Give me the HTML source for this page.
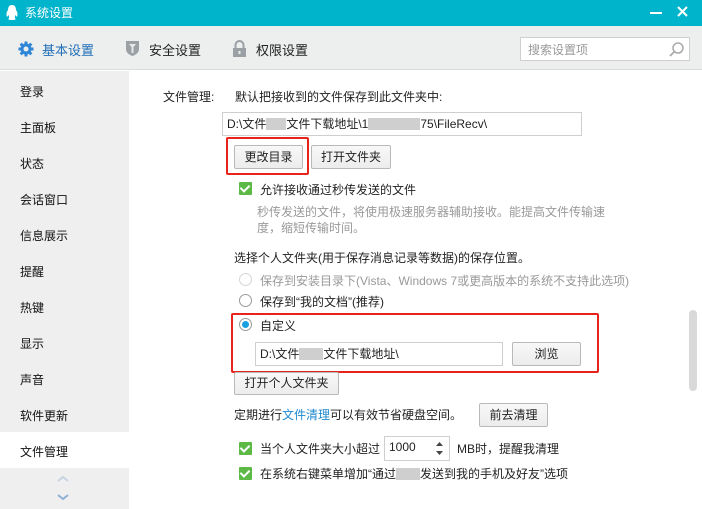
<!DOCTYPE html>
<html><head><meta charset="utf-8"><style>
*{margin:0;padding:0;box-sizing:border-box}
body{width:702px;height:509px;overflow:hidden;position:relative;font-family:"Liberation Sans","Noto Sans CJK SC",sans-serif;font-size:12px;color:#222;background:#fff}
.a{position:absolute;white-space:nowrap}
.btn{position:absolute;border:1px solid #b9b9b9;border-radius:2px;background:linear-gradient(#f8f8f8,#ececec);text-align:center;font-size:12px;color:#222}
.inp{position:absolute;border:1px solid #cfcfcf;background:#fff;padding-left:4px;font-size:12px}
.cb{position:absolute;width:13px;height:13px;background:#5cb946;border-radius:1px}
.cb:after{content:"";position:absolute;left:3px;top:1px;width:4px;height:7px;border:solid #fff;border-width:0 2px 2px 0;transform:rotate(45deg)}
.rd{position:absolute;width:13px;height:13px;border:1px solid #9a9a9a;border-radius:50%;background:#fff}
.side{position:absolute;left:20px;font-size:12px;color:#111}
.blur{display:inline-block;background:#cfcfcf;height:12px;vertical-align:-2px}
</style></head><body>
<div class="a" style="left:0;top:0;width:702px;height:26px;background:#00b4cc"></div>
<svg class="a" style="left:5px;top:4px" width="14" height="17" viewBox="0 0 14 17"><path d="M7 1C4 1 3 3.5 3 6C1.5 8 1 10 2 13C3 12 3 11.5 3.5 11C4 13 5 14 3 15C5 16.5 9 16.5 11 15C9 14 10 13 10.5 11C11 11.5 11 12 12 13C13 10 12.5 8 11 6C11 3.5 10 1 7 1Z" fill="#fff"/></svg>
<div class="a" style="left:25px;top:4px;color:#fff;font-size:12px">系统设置</div>
<div class="a" style="left:650px;top:12px;width:12px;height:2px;background:#fff"></div>
<svg class="a" style="left:677px;top:6px" width="11" height="11"><path d="M1 1L10 10M10 1L1 10" stroke="#fff" stroke-width="2"/></svg>
<div class="a" style="left:0;top:26px;width:702px;height:44px;background:#edeeee;border-bottom:1px solid #dcdcdc"></div>
<svg class="a" style="left:18px;top:41px" width="16" height="16" viewBox="0 0 16 16"><g fill="#2f86d6"><circle cx="8" cy="8" r="5.5"/><rect x="6.5" y="0.5" width="3" height="15"/><rect x="0.5" y="6.5" width="15" height="3"/><rect x="6.5" y="0.5" width="3" height="15" transform="rotate(45 8 8)"/><rect x="6.5" y="0.5" width="3" height="15" transform="rotate(-45 8 8)"/></g><circle cx="8" cy="8" r="2.5" fill="#edeeee"/></svg>
<div class="a" style="left:42px;top:40px;font-size:13px;color:#1f6fb8">基本设置</div>
<svg class="a" style="left:125px;top:40px" width="15" height="17" viewBox="0 0 15 17"><path d="M1 1H14V9C14 13 10 15 7.5 16C5 15 1 13 1 9Z" fill="#9aa0a4"/><path d="M4 4H11L8.5 7V13H6.5V7Z" fill="#e8e8e8"/></svg>
<div class="a" style="left:149px;top:40px;font-size:13px">安全设置</div>
<svg class="a" style="left:232px;top:40px" width="15" height="17" viewBox="0 0 15 17"><path d="M3.5 8V5A4 4 0 0 1 11.5 5V8" stroke="#9aa0a4" stroke-width="2" fill="none"/><rect x="1" y="8" width="13" height="9" fill="#9aa0a4"/><rect x="6.5" y="11" width="2" height="3" fill="#edeeee"/></svg>
<div class="a" style="left:256px;top:40px;font-size:13px">权限设置</div>
<div class="a" style="left:520px;top:37px;width:170px;height:24px;border:1px solid #cfcfcf;background:#fff"></div>
<div class="a" style="left:528px;top:41px;color:#999;font-size:12px">搜索设置项</div>
<svg class="a" style="left:668px;top:41px" width="17" height="17"><circle cx="10" cy="7" r="5" stroke="#aaa" stroke-width="1.5" fill="none"/><path d="M6.5 10.5L2 15" stroke="#aaa" stroke-width="1.8"/></svg>
<div class="a" style="left:0;top:71px;width:129px;height:438px;background:#efefef"></div>
<div class="a" style="left:0;top:432px;width:129px;height:36px;background:#fff"></div>
<div class="side" style="top:83px">登录</div>
<div class="side" style="top:119px">主面板</div>
<div class="side" style="top:155px">状态</div>
<div class="side" style="top:191px">会话窗口</div>
<div class="side" style="top:227px">信息展示</div>
<div class="side" style="top:263px">提醒</div>
<div class="side" style="top:299px">热键</div>
<div class="side" style="top:335px">显示</div>
<div class="side" style="top:371px">声音</div>
<div class="side" style="top:407px">软件更新</div>
<div class="side" style="top:443px">文件管理</div>
<svg class="a" style="left:57px;top:475px" width="12" height="28"><path d="M1 6L6 2L11 6" stroke="#c5d3e3" stroke-width="2" fill="none"/><path d="M1 20L6 24L11 20" stroke="#8fb0d6" stroke-width="2" fill="none"/></svg>
<div class="a" style="left:163px;top:88px">文件管理:</div>
<div class="a" style="left:235px;top:88px">默认把接收到的文件保存到此文件夹中:</div>
<div class="inp" style="left:222px;top:112px;width:360px;height:24px;line-height:22px">D:\文件<span class="blur" style="width:20px"></span>文件下载地址\1<span class="blur" style="width:52px"></span>75\FileRecv\</div>
<div class="a" style="left:226px;top:137px;width:83px;height:38px;border:2px solid #e8231c;border-radius:2px"></div>
<div class="btn" style="left:234px;top:145px;width:69px;height:24px;line-height:22px">更改目录</div>
<div class="btn" style="left:311px;top:145px;width:80px;height:24px;line-height:22px">打开文件夹</div>
<div class="cb" style="left:239px;top:182px"></div>
<div class="a" style="left:260px;top:181px">允许接收通过秒传发送的文件</div>
<div class="a" style="left:257px;top:203px;color:#999">秒传发送的文件，将使用极速服务器辅助接收。能提高文件传输速</div>
<div class="a" style="left:257px;top:219px;color:#999">度，缩短传输时间。</div>
<div class="a" style="left:234px;top:249px">选择个人文件夹(用于保存消息记录等数据)的保存位置。</div>
<div class="rd" style="left:239px;top:273px;border-color:#d5d5d5"></div>
<div class="a" style="left:260px;top:272px;color:#999">保存到安装目录下(Vista、Windows 7或更高版本的系统不支持此选项)</div>
<div class="rd" style="left:239px;top:294px"></div>
<div class="a" style="left:260px;top:293px">保存到“我的文档”(推荐)</div>
<div class="a" style="left:231px;top:313px;width:368px;height:60px;border:2px solid #e8231c;border-radius:2px"></div>
<div class="rd" style="left:239px;top:318px"></div>
<div class="a" style="left:242px;top:321px;width:7px;height:7px;border-radius:50%;background:#1a9fe0"></div>
<div class="a" style="left:260px;top:317px">自定义</div>
<div class="inp" style="left:255px;top:342px;width:248px;height:24px;line-height:22px">D:\文件<span class="blur" style="width:24px"></span>文件下载地址\</div>
<div class="btn" style="left:512px;top:342px;width:69px;height:24px;line-height:22px">浏览</div>
<div class="btn" style="left:234px;top:372px;width:105px;height:23px;line-height:21px">打开个人文件夹</div>
<div class="a" style="left:234px;top:406px">定期进行<span style="color:#1d88d0">文件清理</span>可以有效节省硬盘空间。</div>
<div class="btn" style="left:479px;top:403px;width:69px;height:24px;line-height:22px">前去清理</div>
<div class="cb" style="left:239px;top:442px"></div>
<div class="a" style="left:260px;top:440px">当个人文件夹大小超过</div>
<div class="inp" style="left:384px;top:436px;width:66px;height:25px;line-height:20px;color:#222">1000</div>
<svg class="a" style="left:435px;top:441px" width="9" height="15"><path d="M1 5L4.5 1L8 5Z M1 10L4.5 14L8 10Z" fill="#444"/></svg>
<div class="a" style="left:457px;top:440px">MB时，提醒我清理</div>
<div class="cb" style="left:239px;top:467px"></div>
<div class="a" style="left:260px;top:465px">在系统右键菜单增加“通过<span class="blur" style="width:24px"></span>发送到我的手机及好友”选项</div>
<div class="a" style="left:689px;top:310px;width:8px;height:81px;border-radius:4px;background:#d9d9d9"></div>
</body></html>
